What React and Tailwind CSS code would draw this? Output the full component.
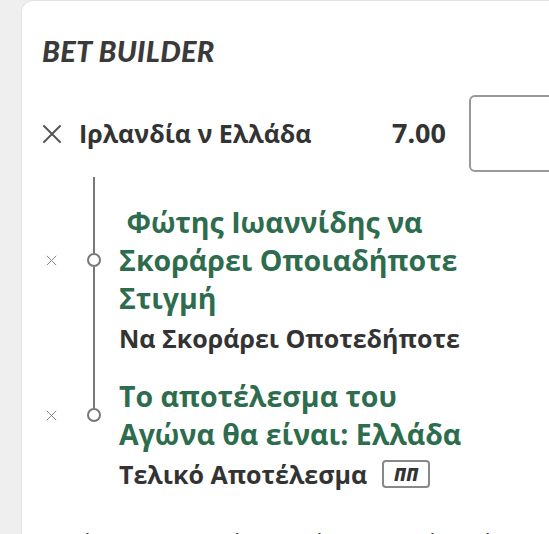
import React from 'react';

const GREEN = 'text-[#2e6c4e]';

const Cross = ({ size = 20, stroke = 2, color = '#555' }) => (
  <svg width={size} height={size} viewBox="0 0 20 20" fill="none">
    <path d="M2 2L18 18M18 2L2 18" stroke={color} strokeWidth={stroke} strokeLinecap="round" />
  </svg>
);

const Rail = ({ top = true, bottom = true }) => (
  <div className="ml-[26px] w-[16px] flex flex-col items-center">
    <div className={`w-[2px] flex-1 ${top ? 'bg-[#777]' : ''}`} />
    <div className="w-[14px] h-[14px] rounded-full border-2 border-[#777] bg-white shrink-0" />
    <div className={`w-[2px] flex-1 ${bottom ? 'bg-[#777]' : ''}`} />
  </div>
);

const Selection = ({ title, market, badge, last }) => (
  <div>
    <div className="flex">
      <div className="w-[18px] flex items-center justify-center">
        <Cross size={11} stroke={1.6} color="#777" />
      </div>
      <Rail top bottom={!last} />
      <div className={`ml-[17px] text-[28.5px] leading-[38px] font-bold ${GREEN}`}>
        {title.map((l, i) => (
          <div key={i} className="whitespace-pre">{l}</div>
        ))}
      </div>
    </div>
    <div className="flex">
      <div className="w-[18px]" />
      <div className="ml-[26px] w-[16px] flex justify-center">
        {!last && <div className="w-[2px] bg-[#777]" />}
      </div>
      <div className={`ml-[17px] mt-[4px] ${last ? '' : 'pb-[22px]'} flex items-center text-[25px] leading-[34px] font-bold text-[#333]`}>
        <span>{market}</span>
        {badge && (
          <span className="ml-[15px] w-[48px] h-[28px] flex items-center justify-center border-2 border-[#888] rounded-[4px] text-[17px] font-extrabold italic text-[#333] leading-none">
            {badge}
          </span>
        )}
      </div>
    </div>
  </div>
);

export default function App() {
  return (
    <div
      className="h-[534px] overflow-hidden bg-[#efefef] pl-[21px] flex"
      style={{ fontFamily: '"Open Sans", "Noto Sans", sans-serif' }}
    >
      <div className="w-[558px] shrink-0 bg-white rounded-tl-[12px] border-l border-t border-[#e2e2e2] pl-[20px] pt-[34px]">
        <h2
          className="text-[29px] leading-[32px] font-black italic text-[#3a3a3a] tracking-[0.3px]"
          style={{ fontFamily: 'Lato, "Open Sans", sans-serif' }}
        >
          BET BUILDER
        </h2>

        <div className="mt-[28px] flex items-center h-[77px]">
          <Cross size={20} stroke={2} color="#555" />
          <span className="ml-[17px] text-[25px] font-bold text-[#333]">Ιρλανδία ν Ελλάδα</span>
          <span className="ml-auto text-[27px] font-bold text-[#333]">7.00</span>
          <div className="ml-[23px] w-[110px] h-[77px] border-2 border-[#999] rounded-[6px] bg-white shrink-0" />
        </div>

        <div className="mt-[5px]">
          <div className="flex h-[26px]">
            <div className="w-[18px]" />
            <div className="ml-[26px] w-[16px] flex justify-center">
              <div className="w-[2px] bg-[#777]" />
            </div>
          </div>
          <Selection
            title={[' Φώτης Ιωαννίδης να', 'Σκοράρει Οποιαδήποτε', 'Στιγμή']}
            market="Να Σκοράρει Οποτεδήποτε"
          />
          <Selection
            title={['Το αποτέλεσμα του', 'Αγώνα θα είναι: Ελλάδα']}
            market="Τελικό Αποτέλεσμα"
            badge="ΠΠ"
            last
          />
        </div>

        <p className="mt-[36px] text-[22px] leading-[30px] text-[#333]">
          Αυτόματη αποδοχή αλλαγών στις Τιμές απόδοσης
        </p>
      </div>
    </div>
  );
}
